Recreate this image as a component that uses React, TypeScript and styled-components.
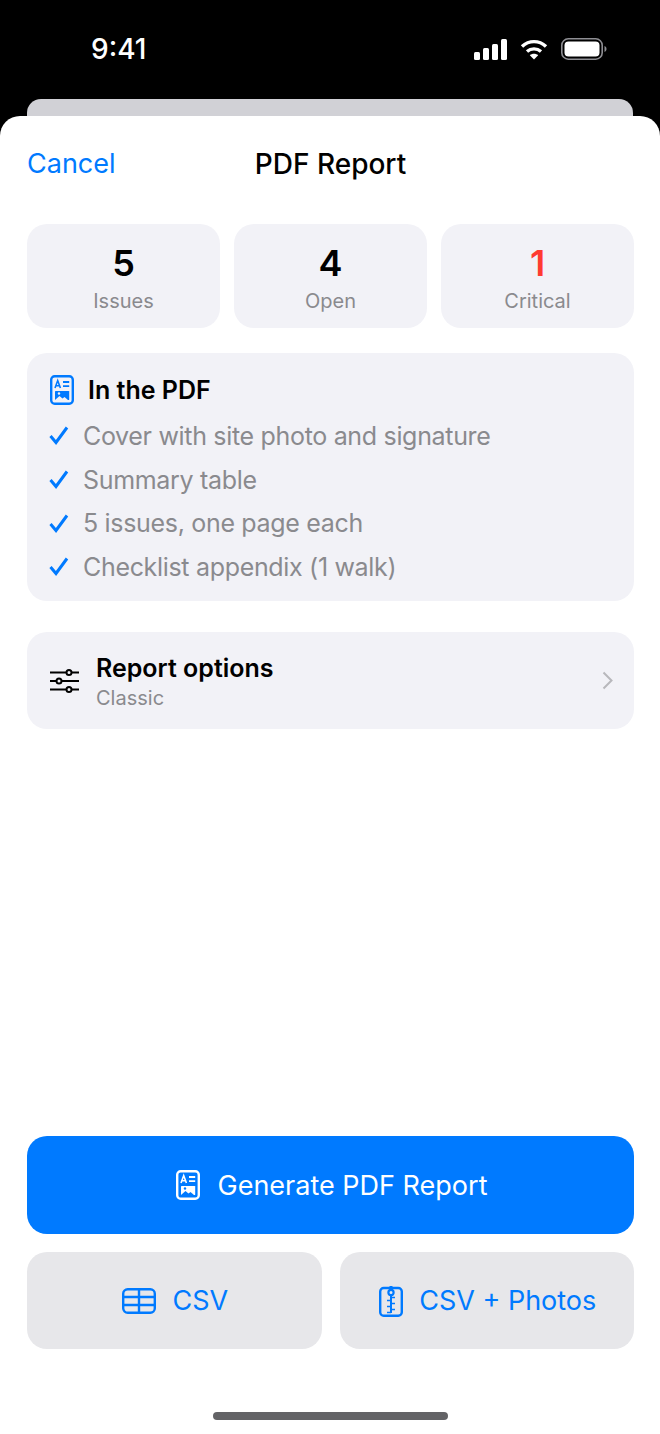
import { FC, ReactElement, ReactNode } from "react";
import styled, { createGlobalStyle } from "styled-components";

const BLUE = "#007aff";
const GREY = "#8a8a8e";
const CARD = "#f2f2f7";

const GlobalStyle = createGlobalStyle`
    html, body {
        margin: 0;
        padding: 0;
        background: #000;
    }

    * {
        box-sizing: border-box;
    }

    body {
        font-family: Inter, "Liberation Sans", sans-serif;
    }
`;

const Screen = styled.div`
    width: 660px;
    height: 1434px;
    display: flex;
    flex-direction: column;
    background: #000;
    overflow: hidden;
`;

const StatusBar = styled.div`
    height: 99px;
    flex: none;
    display: flex;
    justify-content: space-between;
    align-items: flex-start;
    padding: 32px 53px 0 91px;
    color: #fff;
`;

const Clock = styled.span`
    font-size: 28px;
    line-height: 34px;
    font-weight: 500;
`;

const StatusIcons = styled.div`
    display: flex;
    align-items: center;
    gap: 13px;
    height: 34px;
`;

const BehindCard = styled.div`
    height: 17px;
    flex: none;
    margin: 0 27px;
    background: #d1d1d6;
    border-radius: 14px 14px 0 0;
`;

const Sheet = styled.div`
    flex: 1;
    display: flex;
    flex-direction: column;
    background: #fff;
    border-radius: 20px 20px 0 0;
    padding: 0 26px 0 27px;
`;

const NavBar = styled.div`
    height: 96px;
    flex: none;
    display: flex;
    align-items: center;
    position: relative;
    padding-bottom: 1px;
`;

const CancelLink = styled.span`
    font-size: 27px;
    color: ${BLUE};
`;

const NavTitle = styled.span`
    position: absolute;
    left: 0;
    right: 0;
    text-align: center;
    font-size: 28px;
    font-weight: 500;
    color: #000;
    pointer-events: none;
`;

const StatsRow = styled.div`
    margin-top: 12px;
    display: grid;
    grid-template-columns: repeat(3, 1fr);
    gap: 14px;
`;

const StatCard = styled.div`
    height: 104px;
    background: ${CARD};
    border-radius: 20px;
    display: flex;
    flex-direction: column;
    align-items: center;
    padding-top: 16px;
`;

const StatValue = styled.span<{ $critical?: boolean }>`
    font-size: 36px;
    line-height: 46px;
    font-weight: 600;
    color: ${(props) => (props.$critical ? "#ff3b30" : "#000")};
`;

const StatLabel = styled.span`
    font-size: 20px;
    line-height: 24px;
    margin-top: 3px;
    color: ${GREY};
`;

const IncludedCard = styled.div`
    margin-top: 25px;
    height: 248px;
    background: ${CARD};
    border-radius: 20px;
    padding: 22px 22px 0 22px;
`;

const IncludedHeader = styled.div`
    display: flex;
    align-items: center;
    gap: 14px;
    height: 30px;
    margin-bottom: 9px;
    padding-left: 1px;
`;

const CardTitle = styled.span`
    font-size: 25px;
    line-height: 30px;
    font-weight: 600;
    color: #000;
`;

const CheckRow = styled.div`
    display: flex;
    align-items: center;
    gap: 14px;
    height: 43.7px;
    font-size: 25px;
    letter-spacing: -0.32px;
    color: ${GREY};
`;

const OptionsCard = styled.div`
    margin-top: 31px;
    height: 97px;
    background: ${CARD};
    border-radius: 20px;
    display: flex;
    align-items: center;
    padding: 0 21px 0 23px;
`;

const OptionsText = styled.div`
    flex: 1;
    display: flex;
    flex-direction: column;
    margin-left: 17px;
    padding-top: 2px;
`;

const OptionsValue = styled.span`
    font-size: 20px;
    line-height: 26px;
    margin-top: 2px;
    color: ${GREY};
`;

const Actions = styled.div`
    margin-top: auto;
    display: flex;
    flex-direction: column;
    gap: 18px;
`;

const ActionButton = styled.div<{ $primary?: boolean }>`
    height: ${(props) => (props.$primary ? "98px" : "97px")};
    border-radius: 20px;
    display: flex;
    align-items: center;
    justify-content: center;
    gap: ${(props) => (props.$primary ? "18px" : "16px")};
    padding-left: 2px;
    font-size: 27px;
    background: ${(props) => (props.$primary ? BLUE : "#e7e7ea")};
    color: ${(props) => (props.$primary ? "#fff" : BLUE)};
`;

const SecondaryRow = styled.div`
    display: grid;
    grid-template-columns: 1fr 1fr;
    gap: 18px;
`;

const HomeBar = styled.div`
    height: 85px;
    flex: none;
    display: flex;
    justify-content: center;
    padding-top: 63px;
`;

const HomeIndicator = styled.div`
    width: 235px;
    height: 8px;
    border-radius: 4px;
    background: #636366;
`;

const SignalIcon: FC = (): ReactElement => (
    <svg width="33" height="21" viewBox="0 0 33 21" fill="#fff">
        <rect x="0" y="13" width="6" height="8" rx="1.5" />
        <rect x="9" y="9" width="6" height="12" rx="1.5" />
        <rect x="18" y="5" width="6" height="16" rx="1.5" />
        <rect x="27" y="0" width="6" height="21" rx="1.5" />
    </svg>
);

const WifiIcon: FC = (): ReactElement => (
    <svg width="28" height="21" viewBox="0 0 28 21" fill="none" stroke="#fff" strokeWidth="3.4">
        <path d="M2 7.5C9 1 19 1 26 7.5" />
        <path d="M7 12.5C11 9 17 9 21 12.5" />
        <path d="M14 20.5L9.8 16.2C12 14.2 16 14.2 18.2 16.2Z" fill="#fff" stroke="none" />
    </svg>
);

const BatteryIcon: FC = (): ReactElement => (
    <svg width="46" height="22" viewBox="0 0 46 22" fill="none">
        <rect x="0.8" y="0.8" width="40.4" height="20.4" rx="6.5" stroke="#8e8e93" strokeWidth="1.6" />
        <rect x="3.5" y="3.5" width="35" height="15" rx="4" fill="#fff" />
        <path d="M43.5 8v6c1.2-.4 2-1.600 2-3s-.8-2.600-2-3Z" fill="#8e8e93" />
    </svg>
);

const ReportIcon: FC<{ color: string, background: string }> = ({ color, background }): ReactElement => (
    <svg width="24" height="30" viewBox="0 0 24 30" fill="none">
        <rect x="1.200" y="1.200" width="21.600" height="27.600" rx="3.500" stroke={color} strokeWidth="2.400" />
        <path d="M5 13l2.700-7.500L10.400 13M5.900 10.800h3.600" stroke={color} strokeWidth="1.600" />
        <path d="M13 7h6.200M13 11.200h6.200" stroke={color} strokeWidth="1.800" />
        <rect x="5" y="16" width="14.200" height="9" rx="0.600" fill={color} />
        <path d="M5 25l4.500-4 3 2.500 2-1.500 3.500 3Z" fill={background} />
        <circle cx="9" cy="18.500" r="1.200" fill={background} />
    </svg>
);

const CheckIcon: FC = (): ReactElement => (
    <svg width="20" height="19" viewBox="0 0 20 19" fill="none">
        <path d="M1.500 10L7 16.500L18 1.500" stroke={BLUE} strokeWidth="3" />
    </svg>
);

const SlidersIcon: FC = (): ReactElement => (
    <svg width="29" height="24" viewBox="0 0 29 24" fill="none" stroke="#000" strokeWidth="2">
        <path d="M0 3.500h16.500M21.500 3.500H29M0 12h6.500M11.500 12H29M0 20.500h16.500M21.500 20.500H29" />
        <circle cx="19" cy="3.500" r="2.500" />
        <circle cx="9" cy="12" r="2.500" />
        <circle cx="19" cy="20.500" r="2.500" />
    </svg>
);

const ChevronIcon: FC = (): ReactElement => (
    <svg width="11" height="19" viewBox="0 0 11 19" fill="none">
        <path d="M1.500 1.500L9.500 9.500L1.500 17.500" stroke="#b8b8bc" strokeWidth="2" />
    </svg>
);

const TableIcon: FC = (): ReactElement => (
    <svg width="34" height="26" viewBox="0 0 34 26" fill="none" stroke={BLUE} strokeWidth="2.400">
        <rect x="1.200" y="1.200" width="31.600" height="23.600" rx="4.500" />
        <path d="M1 9h32M1 17h32M17 1v24" />
    </svg>
);

const ZipIcon: FC = (): ReactElement => (
    <svg width="24" height="32" viewBox="0 0 24 32" fill="none" stroke={BLUE}>
        <rect x="1.200" y="3" width="21.600" height="27.800" rx="3.500" strokeWidth="2.400" />
        <path d="M12 1v5" strokeWidth="3" />
        <circle cx="12" cy="7.500" r="2.600" fill="#e7e7ea" strokeWidth="2.200" />
        <path d="M12 10v18" strokeWidth="2" />
        <path d="M12 12.500h4M8 15.500h4M12 18.500h4M8 21.500h4M12 24.500h4M8 27.500h4" strokeWidth="1.600" />
    </svg>
);

const included: string[] = [
    "Cover with site photo and signature",
    "Summary table",
    "5 issues, one page each",
    "Checklist appendix (1 walk)"
];

const stats: { value: string, label: string, critical?: boolean }[] = [
    { value: "5", label: "Issues" },
    { value: "4", label: "Open" },
    { value: "1", label: "Critical", critical: true }
];

const Button: FC<{ primary?: boolean, icon: ReactNode, label: string }> = ({ primary, icon, label }): ReactElement => (
    <ActionButton $primary={primary}>
        {icon}
        <span>{label}</span>
    </ActionButton>
);

export default function App(): ReactElement {
    return (
        <Screen>
            <GlobalStyle />
            <StatusBar>
                <Clock>9:41</Clock>
                <StatusIcons>
                    <SignalIcon />
                    <WifiIcon />
                    <BatteryIcon />
                </StatusIcons>
            </StatusBar>
            <BehindCard />
            <Sheet>
                <NavBar>
                    <CancelLink>Cancel</CancelLink>
                    <NavTitle>PDF Report</NavTitle>
                </NavBar>

                <StatsRow>
                    {stats.map((stat) => (
                        <StatCard key={stat.label}>
                            <StatValue $critical={stat.critical}>{stat.value}</StatValue>
                            <StatLabel>{stat.label}</StatLabel>
                        </StatCard>
                    ))}
                </StatsRow>

                <IncludedCard>
                    <IncludedHeader>
                        <ReportIcon color={BLUE} background={CARD} />
                        <CardTitle>In the PDF</CardTitle>
                    </IncludedHeader>
                    {included.map((item) => (
                        <CheckRow key={item}>
                            <CheckIcon />
                            <span>{item}</span>
                        </CheckRow>
                    ))}
                </IncludedCard>

                <OptionsCard>
                    <SlidersIcon />
                    <OptionsText>
                        <CardTitle>Report options</CardTitle>
                        <OptionsValue>Classic</OptionsValue>
                    </OptionsText>
                    <ChevronIcon />
                </OptionsCard>

                <Actions>
                    <Button primary icon={<ReportIcon color="#fff" background={BLUE} />} label="Generate PDF Report" />
                    <SecondaryRow>
                        <Button icon={<TableIcon />} label="CSV" />
                        <Button icon={<ZipIcon />} label="CSV + Photos" />
                    </SecondaryRow>
                </Actions>

                <HomeBar>
                    <HomeIndicator />
                </HomeBar>
            </Sheet>
        </Screen>
    );
}
